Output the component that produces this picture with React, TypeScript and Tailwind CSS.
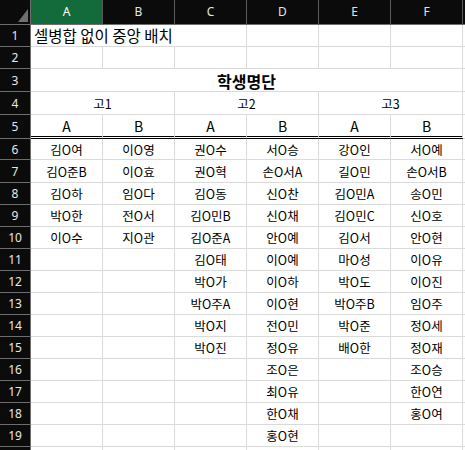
const columns = ["A", "B", "C", "D", "E", "F"];

// 학생 이름: 행 6부터 19까지, 빈 칸은 ""
const roster: string[][] = [
  ["김O여", "이O영", "권O수", "서O승", "강O인", "서O예"],
  ["김O준B", "이O효", "권O혁", "손O서A", "길O민", "손O서B"],
  ["김O하", "임O다", "김O동", "신O찬", "김O민A", "송O민"],
  ["박O한", "전O서", "김O민B", "신O채", "김O민C", "신O호"],
  ["이O수", "지O관", "김O준A", "안O예", "김O서", "안O현"],
  ["", "", "김O태", "이O예", "마O성", "이O유"],
  ["", "", "박O가", "이O하", "박O도", "이O진"],
  ["", "", "박O주A", "이O현", "박O주B", "임O주"],
  ["", "", "박O지", "전O민", "박O준", "정O세"],
  ["", "", "박O진", "정O유", "배O한", "정O재"],
  ["", "", "", "조O은", "", "조O승"],
  ["", "", "", "최O유", "", "한O연"],
  ["", "", "", "한O채", "", "홍O여"],
  ["", "", "", "홍O현", "", ""],
];

const rowHeights = ["h-[21px]", "h-[23px]", "h-[22px]", "h-[22px]", "h-[22px]", "h-[22px]", "h-[22px]", "h-[22px]", "h-[22px]", "h-[22px]", "h-[22px]", "h-[22px]", "h-[22px]", "h-[22px]"];

function RowHead({ n }: { n?: number }) {
  return (
    <div className="flex w-[31px] shrink-0 items-center justify-center border-r border-b border-[#6e6e6e] bg-[#0b0b0b] pt-px font-['Noto_Sans',sans-serif] text-[12px] text-[#e8e8e8]">
      {n}
    </div>
  );
}

function Cell({ children, className = "" }: { children?: React.ReactNode; className?: string }) {
  return (
    <div className={`flex w-[72px] shrink-0 items-center justify-center border-r border-b border-[#dadada] ${className}`}>
      {children}
    </div>
  );
}

function Filler() {
  return <div className="flex-1 border-b border-[#dadada]" />;
}

export default function App() {
  return (
    <div className="h-[450px] w-[465px] overflow-hidden bg-white font-['Noto_Sans_CJK_KR',sans-serif] text-black">
      {/* column headers */}
      <div className="flex h-[25px]">
        <div className="relative w-[31px] shrink-0 border-r border-b border-[#6e6e6e] bg-[#0b0b0b]">
          <svg className="absolute left-[18px] top-[9px]" width="10" height="13" viewBox="0 0 10 13">
            <polygon points="0,13 10,0 10,13" fill="#6f6f6f" />
          </svg>
        </div>
        {columns.map((c, i) => (
          <div
            key={c}
            className={`flex w-[72px] shrink-0 items-center justify-center border-r border-b border-[#5a5a5a] border-b-[#6e6e6e] font-['Noto_Sans',sans-serif] text-[12px] ${
              i === 0 ? "bg-[#136b3b] text-white" : "bg-[#0b0b0b] text-[#e4e4e4]"
            }`}
          >
            {c}
          </div>
        ))}
        <div className="flex-1 border-b border-[#6e6e6e] bg-[#0b0b0b]" />
      </div>

      {/* 1 */}
      <div className="flex h-[22px]">
        <RowHead n={1} />
        <div className="flex w-[216px] shrink-0 items-center whitespace-nowrap border-r border-b border-[#dadada] pl-[3px] pt-px text-[15.5px]">
          셀병합 없이 중앙 배치
        </div>
        <Cell />
        <Cell />
        <Cell />
        <Filler />
      </div>

      {/* 2 */}
      <div className="flex h-[22px]">
        <RowHead n={2} />
        {columns.map((c) => (
          <Cell key={c} />
        ))}
        <Filler />
      </div>

      {/* 3 */}
      <div className="flex h-[23px]">
        <RowHead n={3} />
        <div className="flex w-[432px] shrink-0 items-center justify-center border-r border-b border-[#dadada] pt-[2px] text-[16px] font-bold">
          학생명단
        </div>
        <Filler />
      </div>

      {/* 4 */}
      <div className="flex h-[23px]">
        <RowHead n={4} />
        {["고1", "고2", "고3"].map((g) => (
          <div key={g} className="flex w-[144px] shrink-0 items-center justify-center border-r border-b border-[#dadada] pt-[2px] text-[12.5px]">
            {g}
          </div>
        ))}
        <Filler />
      </div>

      {/* 5 */}
      <div className="flex h-[24px]">
        <RowHead n={5} />
        {["A", "B", "A", "B", "A", "B"].map((t, i) => (
          <Cell key={i} className="border-b-[3px] border-double border-b-black pt-[1px] text-[14px]">
            {t}
          </Cell>
        ))}
        <Filler />
      </div>

      {roster.map((row, r) => (
        <div key={r} className={`flex ${rowHeights[r]}`}>
          <RowHead n={r + 6} />
          {row.map((name, c) => (
            <Cell key={c} className="pt-[2px] text-[12.5px]">
              {name}
            </Cell>
          ))}
          <Filler />
        </div>
      ))}

      <div className="flex h-[22px]">
        <RowHead />
        {columns.map((c) => (
          <Cell key={c} />
        ))}
        <Filler />
      </div>
    </div>
  );
}
